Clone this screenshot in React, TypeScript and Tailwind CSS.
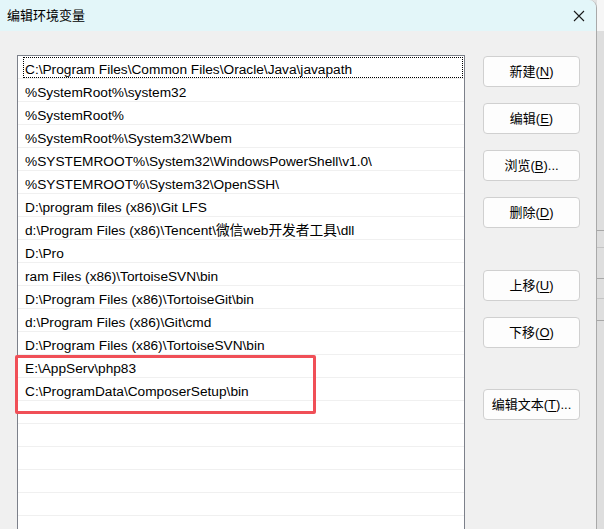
const paths = [
  'C:\\Program Files\\Common Files\\Oracle\\Java\\javapath',
  '%SystemRoot%\\system32',
  '%SystemRoot%',
  '%SystemRoot%\\System32\\Wbem',
  '%SYSTEMROOT%\\System32\\WindowsPowerShell\\v1.0\\',
  '%SYSTEMROOT%\\System32\\OpenSSH\\',
  'D:\\program files (x86)\\Git LFS',
  'd:\\Program Files (x86)\\Tencent\\微信web开发者工具\\dll',
  'D:\\Pro',
  'ram Files (x86)\\TortoiseSVN\\bin',
  'D:\\Program Files (x86)\\TortoiseGit\\bin',
  'd:\\Program Files (x86)\\Git\\cmd',
  'D:\\Program Files (x86)\\TortoiseSVN\\bin',
  'E:\\AppServ\\php83',
  'C:\\ProgramData\\ComposerSetup\\bin',
];

const rows = [...paths, ...Array(7).fill('')];

function DlgButton({ label, mnemonic, tail = '' }: { label: string; mnemonic: string; tail?: string }) {
  return (
    <button
      type="button"
      className="h-[31px] w-[97px] rounded-[4px] border border-[#d0d0d0] bg-[#fdfdfd] text-[13px] text-black"
    >
      {label}(<span className="underline underline-offset-2">{mnemonic}</span>){tail}
    </button>
  );
}

export default function App() {
  return (
    <div className="flex h-[529px] w-[604px] overflow-hidden bg-[#e2e2e2] font-['Liberation_Sans','Noto_Sans_CJK_SC',sans-serif]">
      <div className="flex h-full w-[597px] shrink-0 flex-col overflow-hidden rounded-tr-[8px] border-r border-[#a9a9a9] bg-[#f0f0f0]">
        {/* title bar */}
        <div className="flex h-[31px] shrink-0 items-center justify-between bg-[#e3f6f9] pl-[7px] pr-[10px]">
          <span className="text-[13px] text-black">编辑环境变量</span>
          <svg width="12" height="12" viewBox="0 0 12 12" className="mr-[1px]">
            <path d="M1 1 L11 11 M11 1 L1 11" stroke="#1a1a1a" strokeWidth="1.1" />
          </svg>
        </div>

        {/* body */}
        <div className="relative flex flex-1 gap-[18px] pl-[17px] pt-[24px]">
          <div className="h-[500px] w-[448px] shrink-0 overflow-hidden border border-[#7c808a] bg-white">
            {rows.map((p, i) => (
              <div
                key={i}
                className="relative h-[23px] whitespace-nowrap border-b border-[#f0f0f0] pl-[7px] pt-[6px] text-[13.7px] leading-4 text-black"
              >
                {i === 0 && (
                  <div className="absolute bottom-0 left-[5px] right-[1px] top-[1px] border border-dotted border-black" />
                )}
                {p}
              </div>
            ))}
          </div>

          <div className="flex flex-col pt-[1px]">
            <div className="flex flex-col gap-[16px]">
              <DlgButton label="新建" mnemonic="N" />
              <DlgButton label="编辑" mnemonic="E" />
              <DlgButton label="浏览" mnemonic="B" tail="..." />
              <DlgButton label="删除" mnemonic="D" />
            </div>
            <div className="mt-[42px] flex flex-col gap-[16px]">
              <DlgButton label="上移" mnemonic="U" />
              <DlgButton label="下移" mnemonic="O" />
            </div>
            <div className="mt-[41px]">
              <DlgButton label="编辑文本" mnemonic="T" tail="..." />
            </div>
          </div>

          {/* red highlight annotation */}
          <div className="absolute left-[15px] top-[324px] h-[59px] w-[301px] rounded-[2px] border-[3px] border-[#f04f57]" />
        </div>
      </div>

      {/* window behind */}
      <div className="flex h-full flex-1 flex-col bg-[#dedede]">
        <div className="h-[31px] bg-[#f6f6f6]" />
        <div className="mt-[199px] h-px bg-[#a8a8a8]" />
        <div className="mt-[16px] h-px bg-[#c4c4c4]" />
        <div className="mt-[30px] h-px bg-[#a8a8a8]" />
        <div className="mt-[19px] h-px bg-[#c4c4c4]" />
        <div className="mt-[21px] h-px bg-[#a8a8a8]" />
      </div>
    </div>
  );
}
